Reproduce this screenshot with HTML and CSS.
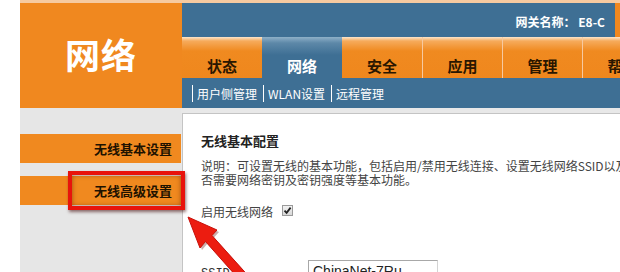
FILE: index.html
```html
<!DOCTYPE html>
<html lang="zh-CN">
<head>
<meta charset="utf-8">
<title>网络</title>
<link rel="stylesheet" href="styles.css">
</head>
<body>
<div class="page">
  <div class="header">
    <div class="logo">网络</div>
    <div class="nav">
      <div class="gw"><span class="gw-text">网关名称：&nbsp;E8-C</span></div>
      <div class="tabs">
        <div class="tab">状态</div>
        <div class="tab active">网络</div>
        <div class="tab">安全</div>
        <div class="tab">应用</div>
        <div class="tab">管理</div>
        <div class="tab">帮助</div>
      </div>
      <div class="subnav">
        <span class="sep"></span><span class="sub">用户侧管理</span>
        <span class="sep"></span><span class="sub">WLAN设置</span>
        <span class="sep"></span><span class="sub">远程管理</span>
      </div>
    </div>
  </div>
  <div class="main">
    <div class="sidebar">
      <div class="menu-item">无线基本设置</div>
      <div class="menu-item">无线高级设置</div>
    </div>
    <div class="content">
      <div class="title">无线基本配置</div>
      <div class="desc">
        <div class="line">说明：可设置无线的基本功能，包括启用/禁用无线连接、设置无线网络SSID以及是</div>
        <div class="line">否需要网络密钥及密钥强度等基本功能。</div>
      </div>
      <div class="enable">启用无线网络<span class="check"><svg width="11" height="11" viewBox="0 0 11 11"><path d="M2.5 5.6 L4.6 7.8 L8.6 2.6" fill="none" stroke="#222" stroke-width="1.8"/></svg></span></div>
      <div class="row"><span class="label">SSID:</span><span class="input">ChinaNet-7Ru</span></div>
    </div>
  </div>
  <div class="highlight"></div>
  <svg class="arrow" width="620" height="272" viewBox="0 0 620 272">
    <polygon points="188,217 200,248 205.5,241.5 245,286 252,280 212,235.5 217,230" fill="#6a1a14" opacity="0.35" transform="translate(2,2)"/>
    <polygon points="188,217 200,248 205.5,241.5 245,286 252,280 212,235.5 217,230" fill="#ec1c10" stroke="#c8100a" stroke-width="1"/>
  </svg>
</div>
</body>
</html>
```

FILE: styles.css
```css
html, body {
  margin: 0;
  padding: 0;
  background: #ffffff;
}
body {
  width: 620px;
  height: 272px;
  overflow: hidden;
  font-family: "Noto Sans CJK SC", "Liberation Sans", sans-serif;
}
.page {
  position: relative;
  width: 620px;
  height: 272px;
  overflow: hidden;
}
.header {
  display: flex;
  margin-left: 20px;
  border-top: 3px solid #f6caa0;
  height: 105px;
}
.logo {
  width: 162px;
  flex: none;
  background: #f0881f;
  color: #ffffff;
  font-size: 35px;
  font-weight: bold;
  letter-spacing: 1px;
  display: flex;
  align-items: center;
  justify-content: center;
  padding-bottom: 4px;
  box-sizing: border-box;
}
.nav {
  flex: 1;
  display: flex;
  flex-direction: column;
  min-width: 0;
}
.gw {
  height: 34px;
  background: #3e6f94;
  border-right: 5px solid #f0881f;
  display: flex;
  align-items: center;
  justify-content: flex-end;
  padding-right: 10px;
}
.gw-text {
  color: #ffffff;
  font-size: 12px;
  font-weight: bold;
  padding-top: 2px;
}
.tabs {
  height: 41px;
  display: flex;
  background: #3e6f94;
  overflow: hidden;
}
.tab {
  width: 80px;
  flex: none;
  box-sizing: border-box;
  background: linear-gradient(#fde6cc 0px, #f6ab5c 4px, #f08a20 14px, #ef871d 100%);
  color: #2a1600;
  font-size: 15px;
  font-weight: bold;
  display: flex;
  align-items: flex-end;
  justify-content: center;
  padding-bottom: 2px;
  border-left: 1px solid #f7c9a0;
}
.tab:first-child {
  border-left: none;
}
.tab.active {
  background: linear-gradient(#8eb0c8 0px, #5d88a8 6px, #3e6f94 18px, #3e6f94 100%);
  color: #ffffff;
  border-left: none;
}
.tab.active + .tab {
  border-left: none;
}
.subnav {
  height: 30px;
  background: #3e6f94;
  display: flex;
  align-items: center;
  padding-left: 10px;
  color: #ffffff;
  font-size: 12px;
}
.sep {
  width: 1px;
  height: 17px;
  background: #ffffff;
  margin-right: 4px;
  margin-left: 6px;
}
.sep:first-child {
  margin-left: 0;
}
.main {
  display: flex;
  margin-left: 20px;
  height: 164px;
}
.sidebar {
  width: 161px;
  flex: none;
  background: #e6e6e6;
  padding-top: 26px;
  box-sizing: border-box;
  display: flex;
  flex-direction: column;
  gap: 13px;
}
.menu-item {
  height: 29px;
  background: #f0891f;
  color: #1e1200;
  font-size: 13px;
  font-weight: bold;
  display: flex;
  align-items: center;
  justify-content: flex-end;
  padding-right: 10px;
  margin-right: -1px;
}
.content {
  flex: 1;
  border-top: 5px solid #e8e8e8;
  background: #ffffff;
  position: relative;
  padding: 19px 0 0 19px;
  color: #333333;
  font-size: 12px;
  box-shadow: inset 1px 1px 0 #c4c4c4;
  border-left: 1px solid #e8e8e8;
  white-space: nowrap;
}
.title {
  font-size: 13px;
  font-weight: bold;
  color: #222222;
  line-height: 18px;
}
.desc {
  margin-top: 8px;
  color: #444444;
}
.line {
  line-height: 15px;
  height: 14px;
}
.enable {
  margin-top: 17px;
  line-height: 18px;
  display: flex;
  align-items: center;
  color: #444444;
}
.check {
  width: 11px;
  height: 11px;
  margin-left: 9px;
  margin-top: -4px;
  border: 1px solid #9a9a9a;
  background: linear-gradient(#f2f2f2, #d8d8d8);
  box-sizing: border-box;
  display: flex;
  align-items: center;
  justify-content: center;
}
.check svg {
  flex: none;
}
.row {
  margin-top: 39px;
  display: flex;
  align-items: flex-start;
}
.label {
  width: 107px;
  padding-top: 7px;
  font-family: "Liberation Mono", monospace;
  font-size: 12px;
  color: #333333;
}
.input {
  width: 130px;
  height: 22px;
  box-sizing: border-box;
  border: 1px solid #a8a8a8;
  border-right-color: #d4d4d4;
  padding: 2px 4px;
  font-family: "Liberation Sans", sans-serif;
  font-size: 14px;
  color: #222222;
}
.highlight {
  position: absolute;
  left: 68px;
  top: 171px;
  width: 117px;
  height: 39px;
  box-sizing: border-box;
  border: 4px solid #e8130c;
  box-shadow: 1px 2px 3px rgba(60, 0, 0, 0.55), inset 0 0 5px rgba(90, 30, 0, 0.55);
}
.arrow {
  position: absolute;
  left: 0;
  top: 0;
  pointer-events: none;
}
```
